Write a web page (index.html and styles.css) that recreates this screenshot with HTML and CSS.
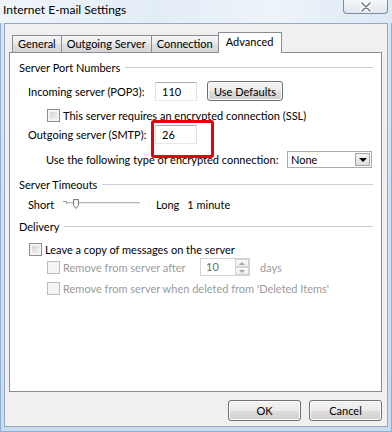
FILE: index.html
```html
<!DOCTYPE html>
<html>
<head>
<meta charset="utf-8">
<title>Internet E-mail Settings</title>
<link rel="stylesheet" href="styles.css">
</head>
<body>
<div class="window">
  <div class="titlebar">
    <span class="title">Internet E-mail Settings</span>
    <span class="close">
      <svg width="16" height="10" viewBox="0 0 16 10">
        <path d="M4 1 L12 9 M12 1 L4 9" stroke="#fff" stroke-width="4" stroke-linecap="round"/>
        <path d="M4 1 L12 9 M12 1 L4 9" stroke="#6f7c8a" stroke-width="1.6" stroke-linecap="round"/>
      </svg>
    </span>
  </div>

  <div class="client">
    <div class="tabs">
      <div class="tab">General</div>
      <div class="tab">Outgoing Server</div>
      <div class="tab">Connection</div>
      <div class="tab active">Advanced</div>
    </div>

    <div class="panel">
      <!-- ports -->
      <div class="group g-ports"><span>Server Port Numbers</span></div>
      <div class="row r-incoming">
        <span class="label">Incoming server (POP3):</span>
        <span class="textbox">110</span>
        <span class="button defaults">Use Defaults</span>
      </div>
      <div class="row r-ssl indent2">
        <span class="check"></span>
        <span>This server requires an encrypted connection (SSL)</span>
      </div>
      <div class="row r-smtp">
        <span class="label">Outgoing server (SMTP):</span>
        <span class="textbox marked">26</span>
      </div>
      <div class="row r-enc">
        <span class="enc-label">Use the following type of encrypted connection:</span>
        <span class="combo">
          <span class="combo-text">None</span>
          <span class="combo-btn"></span>
        </span>
      </div>

      <!-- timeouts -->
      <div class="group g-timeouts"><span>Server Timeouts</span></div>
      <div class="row r-short">
        <span class="short-label">Short</span>
        <svg class="slider" width="78" height="12" viewBox="0 0 78 12">
          <path d="M0 3.5 H3.5 V6" stroke="#9a9a9a" fill="none"/>
          <line x1="4" y1="4.5" x2="77" y2="4.5" stroke="#b9b9b9"/>
          <line x1="4" y1="5.5" x2="77" y2="5.5" stroke="#e9e9e9"/>
          <path d="M10.5 1.5 H15.5 V7.5 L13 10.5 L10.5 7.5 Z" fill="#f4f4f4" stroke="#7c7c7c"/>
        </svg>
        <span class="long">Long</span>
        <span>1 minute</span>
      </div>

      <!-- delivery -->
      <div class="group g-delivery"><span>Delivery</span></div>
      <div class="row r-leave indent1">
        <span class="check"></span>
        <span>Leave a copy of messages on the server</span>
      </div>
      <div class="row r-after indent2 disabled">
        <span class="check off"></span>
        <span class="after-label">Remove from server after</span>
        <span class="spin">
          <span class="spin-text">10</span>
          <span class="spin-btns">
            <span class="spin-up"></span>
            <span class="spin-down"></span>
          </span>
        </span>
        <span class="days">days</span>
      </div>
      <div class="row r-deleted indent2 disabled">
        <span class="check off"></span>
        <span>Remove from server when deleted from 'Deleted Items'</span>
      </div>
    </div>

    <div class="actions">
      <span class="button">OK</span>
      <span class="button">Cancel</span>
    </div>
  </div>
</div>
</body>
</html>
```

FILE: styles.css
```css
/* reset */
* {
  margin: 0;
  padding: 0;
  box-sizing: border-box;
}
body {
  font-family: Lato, "Noto Sans", sans-serif;
  font-size: 11px;
  color: #000;
  background: #cfe0f1;
  white-space: nowrap;
}

/* window frame */
.window {
  width: 392px;
  height: 432px;
  background: linear-gradient(to bottom, #e9f1f9 0, #d8e6f3 30px, #c9dcef 100%);
  padding: 0 4px 5px 4px;
  box-shadow: inset 1px 0 0 #8fb0d4, inset -1px 0 0 #8fb0d4, inset 0 -1px 0 #8fb0d4;
}
.titlebar {
  height: 23px;
  display: flex;
  justify-content: space-between;
  align-items: flex-start;
  margin: 0 -4px;
  padding-left: 3px;
  background: linear-gradient(to right, #eef4fa, #e3edf7 40%, #edf3f9 70%, #dde9f5);
}
.title {
  font-size: 12px;
  line-height: 20px;
}
.close {
  width: 45px;
  height: 14px;
  margin-right: 4px;
  border: 1px solid #7d8da0;
  border-top: none;
  border-radius: 0 0 4px 4px;
  background: linear-gradient(#f4f7fa, #dfe6ee);
  display: flex;
  justify-content: center;
  align-items: center;
}

.client {
  height: 404px;
  background: #f0f0f0;
  border: 1px solid #97a9bf;
  padding: 8px 5px 0 4px;
}

/* tabs */
.tabs {
  display: flex;
  align-items: flex-end;
  height: 20px;
  padding-left: 3px;
}
.tab {
  height: 17px;
  line-height: 15px;
  padding: 0 5px;
  border: 1px solid #898c95;
  border-bottom: none;
  margin-right: -1px;
  background: linear-gradient(#f5f5f5, #ececec 50%, #e0e0e0 51%, #d6d6d6);
}
.tab.active {
  height: 21px;
  line-height: 17px;
  margin-bottom: -1px;
  padding: 0 7px;
  background: #fff;
  position: relative;
  z-index: 1;
}

.panel {
  height: 340px;
  background: #fff;
  border: 1px solid #898c95;
  padding: 0 8px 0 9px;
}

/* group headers */
.group {
  display: flex;
  align-items: center;
  height: 18px;
}
.group::after {
  content: "";
  flex: 1;
  height: 1px;
  margin-left: 5px;
  background: #c8cfd5;
}
.g-ports { margin-top: 5px; }
.g-timeouts { margin-top: 7px; }
.g-delivery { margin-top: 4px; }

/* rows */
.row {
  display: flex;
  align-items: center;
  height: 18px;
  padding-left: 9px;
}
.indent1 { padding-left: 10px; }
.indent2 { padding-left: 28px; }
.r-incoming { margin-top: 6px; }
.r-ssl { margin-top: 6px; }
.r-smtp { margin-top: 1px; }
.r-enc { margin-top: 7px; padding-left: 27px; }
.r-short { margin-top: 2px; }
.r-leave { margin-top: 5px; }
.r-after { margin-top: 0; }
.r-deleted { margin-top: 3px; }

.label {
  width: 127px;
}
.textbox {
  width: 42px;
  height: 19px;
  line-height: 17px;
  padding-left: 6px;
  border: 1px solid #dbdfe6;
  border-top-color: #abadb3;
  border-bottom-color: #e3e9ef;
  background: #fff;
  flex: none;
}
/* red annotation box round the SMTP port */
.marked {
  position: relative;
}
.marked::after {
  content: "";
  position: absolute;
  left: -5px;
  top: -6px;
  width: 57px;
  height: 32px;
  border: 3px solid #e3000f;
  border-radius: 3px;
}

.button {
  display: inline-flex;
  justify-content: center;
  align-items: center;
  height: 21px;
  width: 73px;
  border: 1px solid #707070;
  border-radius: 3px;
  background: linear-gradient(#f2f2f2, #ebebeb 50%, #dddddd 51%, #cfcfcf);
  box-shadow: inset 0 0 0 1px #fcfcfc;
}
.defaults {
  width: 76px;
  height: 20px;
  margin-left: 10px;
}

/* checkboxes */
.check {
  width: 13px;
  height: 13px;
  margin-right: 3px;
  flex: none;
  border: 1px solid #8e8f8f;
  background: linear-gradient(135deg, #cbcfd5, #f6f6f6);
  box-shadow: inset 0 0 0 2px #f4f4f4;
}
.check.off {
  border-color: #bcbcbc;
  background: #f4f4f4;
  box-shadow: none;
}
.disabled {
  color: #9b9b9b;
}

/* combo box */
.enc-label {
  width: 241px;
}
.combo {
  display: flex;
  width: 85px;
  height: 17px;
  border: 1px solid #a9adb2;
  background: #fff;
  padding: 1px;
}
.combo-text {
  flex: 1;
  line-height: 13px;
  padding-left: 2px;
}
.combo-btn {
  width: 15px;
  border: 1px solid #a3a7ad;
  background: linear-gradient(#f6f6f6, #dedede);
  display: flex;
  justify-content: center;
  align-items: center;
}
.combo-btn::after {
  content: "";
  border-left: 4px solid transparent;
  border-right: 4px solid transparent;
  border-top: 4px solid #000;
  margin-top: 1px;
}

/* slider */
.short-label {
  width: 35px;
}
.slider {
  flex: none;
}
.long {
  margin: 0 8px 0 15px;
}

/* spinner */
.after-label {
  width: 137px;
}
.spin {
  display: flex;
  width: 50px;
  height: 18px;
  border: 1px solid #cfd2d6;
  background: #fff;
  flex: none;
}
.spin-text {
  flex: 1;
  padding-left: 5px;
  line-height: 16px;
  color: #6d6d6d;
}
.spin-btns {
  width: 14px;
  display: flex;
  flex-direction: column;
}
.spin-up,
.spin-down {
  flex: 1;
  border: 1px solid #d3d3d3;
  background: linear-gradient(#fafafa, #ececec);
  display: flex;
  justify-content: center;
  align-items: center;
}
.spin-up::after {
  content: "";
  border-left: 3px solid transparent;
  border-right: 3px solid transparent;
  border-bottom: 3px solid #a6a6a6;
}
.spin-down::after {
  content: "";
  border-left: 3px solid transparent;
  border-right: 3px solid transparent;
  border-top: 3px solid #a6a6a6;
}
.days {
  margin-left: 10px;
}

/* dialog buttons */
.actions {
  display: flex;
  justify-content: flex-end;
  gap: 8px;
  margin-top: 8px;
}
```
